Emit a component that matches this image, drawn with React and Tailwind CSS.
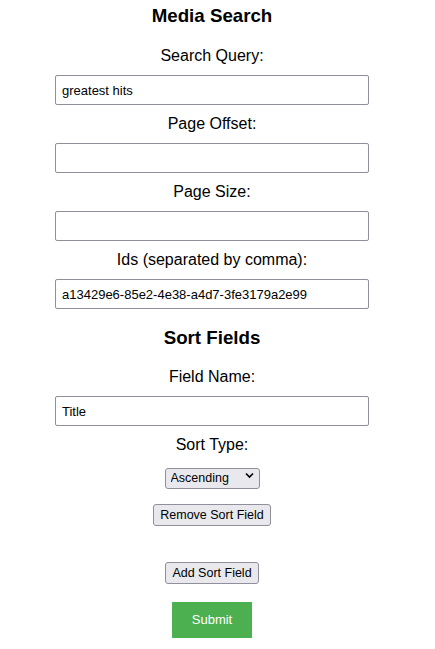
import React, { useState } from "react";

const Label = ({ children }) => (
  <label className="block py-[10px] text-[16px] leading-[18px] text-black">
    {children}
  </label>
);

const Field = ({ value, onChange }) => (
  <input
    type="text"
    value={value}
    onChange={(e) => onChange(e.target.value)}
    className="w-[314px] h-[30px] px-[6px] border border-[#8f8f9d] rounded-[2px] bg-white text-[13px] text-black outline-none"
  />
);

const App = () => {
  const [query, setQuery] = useState("greatest hits");
  const [offset, setOffset] = useState("");
  const [size, setSize] = useState("");
  const [ids, setIds] = useState("a13429e6-85e2-4e38-a4d7-3fe3179a2e99");
  const [fieldName, setFieldName] = useState("Title");
  const [sortType, setSortType] = useState("asc");

  return (
    <div className="w-[424px] bg-white flex flex-col items-center text-center font-['Liberation_Sans',Arial,sans-serif]">
      <h3 className="pt-[5px] mb-[10px] text-[18.72px] leading-[22px] font-bold text-black">
        Media Search
      </h3>

      <Label>Search Query:</Label>
      <Field value={query} onChange={setQuery} />

      <Label>Page Offset:</Label>
      <Field value={offset} onChange={setOffset} />

      <Label>Page Size:</Label>
      <Field value={size} onChange={setSize} />

      <Label>Ids (separated by comma):</Label>
      <Field value={ids} onChange={setIds} />

      <h3 className="pt-[18px] pb-[9px] text-[18.72px] leading-[22px] font-bold text-black">
        Sort Fields
      </h3>

      <Label>Field Name:</Label>
      <Field value={fieldName} onChange={setFieldName} />

      <Label>Sort Type:</Label>
      <div className="relative mt-[1px] w-[95px] h-[21px]">
        <select
          value={sortType}
          onChange={(e) => setSortType(e.target.value)}
          className="appearance-none w-full h-full pl-[5px] pr-[20px] text-left text-[12.5px] leading-[19px] text-black bg-[#e9e9ed] border border-[#8f8f9d] rounded-[3px]"
        >
          <option value="asc">Ascending</option>
          <option value="desc">Descending</option>
        </select>
        <svg
          className="absolute right-[6px] top-[7px] w-[9px] h-[7px] pointer-events-none"
          viewBox="0 0 9 7"
          fill="none"
        >
          <path d="M1 1.5 L4.5 5 L8 1.5" stroke="#000" strokeWidth="1.6" />
        </svg>
      </div>

      <button className="mt-[18px] h-[22px] px-[6px] text-[12.5px] text-black bg-[#e9e9ed] border border-[#8f8f9d] rounded-[3px]">
        Remove Sort Field
      </button>

      <button className="mt-[36px] h-[22px] px-[6px] text-[12.5px] text-black bg-[#e9e9ed] border border-[#8f8f9d] rounded-[3px]">
        Add Sort Field
      </button>

      <button className="mt-[18px] w-[80px] h-[36px] text-[13px] text-white bg-[#4caf50]">
        Submit
      </button>
      <div className="h-[11px]" />
    </div>
  );
};

export default App;
